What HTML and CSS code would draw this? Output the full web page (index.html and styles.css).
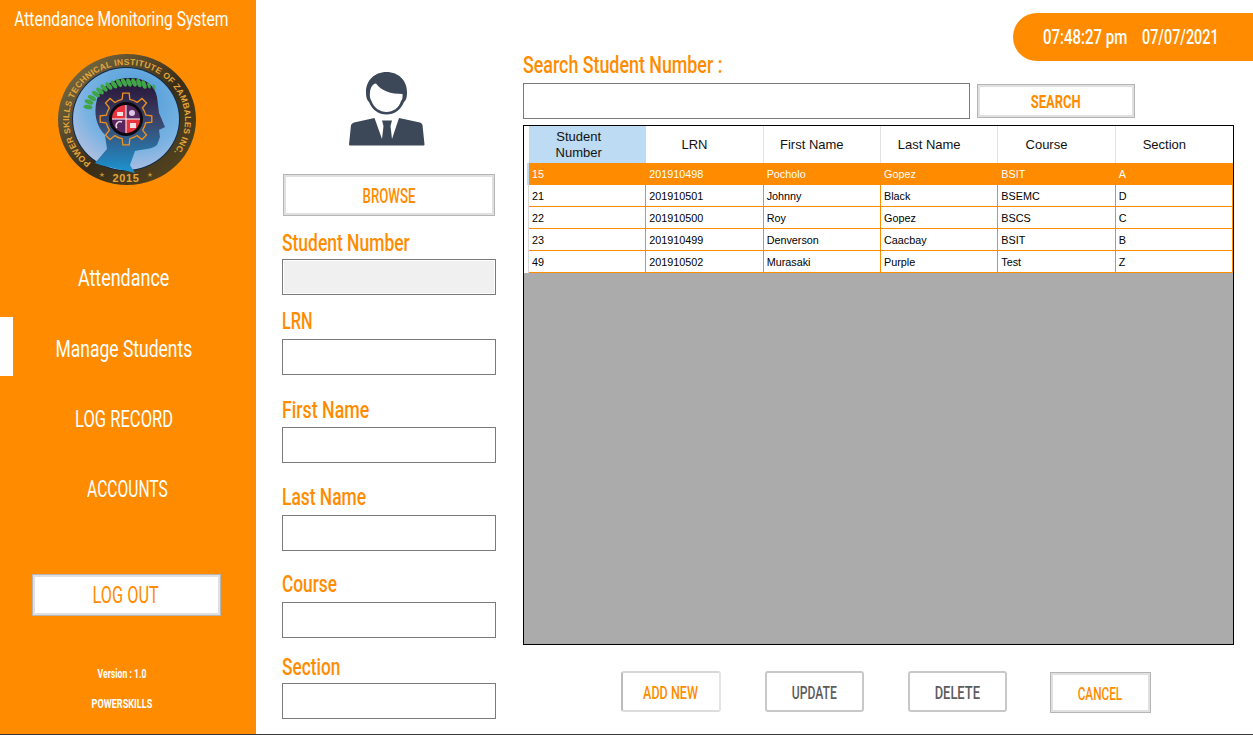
FILE: index.html
```html
<!DOCTYPE html>
<html lang="en">
<head>
<meta charset="utf-8">
<title>Attendance Monitoring System</title>
<link rel="stylesheet" href="styles.css">
</head>
<body>
<div class="app">
  <aside class="sidebar">
    <h1 class="app-title"><span class="sq">Attendance Monitoring System</span></h1>
    <svg class="logo" viewBox="0 0 155 150" width="155" height="150" aria-label="Power Skills Technical Institute of Zambales Inc. seal">
      <defs>
        <linearGradient id="ring" x1="0" y1="0" x2="1" y2="1">
          <stop offset="0" stop-color="#85764a"/><stop offset=".55" stop-color="#3a2d18"/><stop offset="1" stop-color="#5c4c22"/>
        </linearGradient>
        <radialGradient id="sky" cx=".6" cy=".3" r=".75">
          <stop offset="0" stop-color="#4a9bd8"/><stop offset=".65" stop-color="#78b2e2"/><stop offset="1" stop-color="#b4c0e0"/>
        </radialGradient>
        <linearGradient id="head" x1="0" y1="0" x2="0" y2="1">
          <stop offset="0" stop-color="#250f33"/><stop offset=".45" stop-color="#3c4468"/><stop offset="1" stop-color="#1b95d3"/>
        </linearGradient>
        <path id="ring-text" d="M41 118 A58 55 0 1 1 113 118"/>
        <path id="tooth" d="M-3.800 -19.600 L-3.200 -25.800 L3.200 -25.800 L3.800 -19.600 A20 20 0 0 1 11.200 -16.600"/>
        <ellipse id="leaf" rx="4.500" ry="2.200"/>
      </defs>
      <ellipse cx="77" cy="74.500" rx="69" ry="65.500" fill="url(#ring)"/>
      <ellipse cx="76" cy="74" rx="54" ry="52" fill="#102a4a"/>
      <ellipse cx="76" cy="74" rx="53" ry="51" fill="url(#sky)"/>
      <path d="M45 118 L57 104 L55 90 C47 82 43 70 47 54 C52 40 65 33 80 33 C95 33 105 40 107 52 L109 68 L115 82 L109 85 L110 92 L107 100 C103 104 95 104 85 106 L80 120 L85 128 C70 124 55 122 45 118Z" fill="url(#head)"/>
      <g fill="#3fa548">
        <use href="#leaf" transform="translate(38 62) rotate(10)"/>
        <use href="#leaf" transform="translate(39 57) rotate(20)"/>
        <use href="#leaf" transform="translate(42 53) rotate(30)"/>
        <use href="#leaf" transform="translate(46 49) rotate(35)"/>
        <use href="#leaf" transform="translate(50 46) rotate(40)"/>
        <use href="#leaf" transform="translate(54 43) rotate(45)"/>
        <use href="#leaf" transform="translate(59 41) rotate(50)"/>
        <use href="#leaf" transform="translate(64 39.500) rotate(55)"/>
        <use href="#leaf" transform="translate(69 38) rotate(60)"/>
        <use href="#leaf" transform="translate(74 37.500) rotate(60)"/>
        <use href="#leaf" transform="translate(79 37.500) rotate(65)"/>
        <use href="#leaf" transform="translate(84 37.500) rotate(65)"/>
        <use href="#leaf" transform="translate(89 38) rotate(70)"/>
        <use href="#leaf" transform="translate(94 39.500) rotate(70)"/>
        <use href="#leaf" transform="translate(99 40.500) rotate(70) scale(.7)"/>
        <use href="#leaf" transform="translate(104 42) rotate(70) scale(.6)"/>
      </g>
      <g transform="translate(76 74)">
        <g fill="none" stroke="#f0921e" stroke-width="1.300">
          <use href="#tooth"/>
          <use href="#tooth" transform="rotate(45)"/>
          <use href="#tooth" transform="rotate(90)"/>
          <use href="#tooth" transform="rotate(135)"/>
          <use href="#tooth" transform="rotate(180)"/>
          <use href="#tooth" transform="rotate(225)"/>
          <use href="#tooth" transform="rotate(270)"/>
          <use href="#tooth" transform="rotate(315)"/>
        </g>
        <circle r="17" fill="#0c0a10"/>
        <path d="M0 0V-14A14 14 0 0 0 -14 0Z" fill="#e8343f"/>
        <path d="M0 0V-14A14 14 0 0 1 14 0Z" fill="#5a2660"/>
        <path d="M0 0H-14A14 14 0 0 0 0 14Z" fill="#5a2660"/>
        <path d="M0 0H14A14 14 0 0 1 0 14Z" fill="#e8343f"/>
        <path d="M-14 0H14M0 -14V14" stroke="#fff" stroke-width="1"/>
        <rect x="-9" y="-7" width="6" height="4" fill="#f3dfe0"/>
        <circle cx="6" cy="-6" r="3" fill="#d9c7e0"/>
        <path d="M-9 9 A4 4 0 0 1 -4 3" fill="none" stroke="#f3dfe0" stroke-width="1.500"/>
        <rect x="4" y="4" width="6" height="5" fill="#f3dfe0"/>
      </g>
      <text class="seal-text"><textPath href="#ring-text" textLength="262" lengthAdjust="spacing">POWER SKILLS TECHNICAL INSTITUTE OF ZAMBALES INC.</textPath></text>
      <text class="seal-year" x="76" y="137" text-anchor="middle">2015</text>
      <text class="seal-star" x="52" y="132" text-anchor="middle">★</text>
      <text class="seal-star" x="100" y="132" text-anchor="middle">★</text>
    </svg>
    <nav class="nav">
      <a class="nav-item nav-attendance"><span class="nav-mark"></span><span class="nav-text"><span class="sq">Attendance</span></span></a>
      <a class="nav-item nav-manage is-active"><span class="nav-mark"></span><span class="nav-text"><span class="sq">Manage Students</span></span></a>
      <a class="nav-item nav-log"><span class="nav-mark"></span><span class="nav-text"><span class="sq">LOG RECORD</span></span></a>
      <a class="nav-item nav-accounts"><span class="nav-mark"></span><span class="nav-text"><span class="sq">ACCOUNTS</span></span></a>
    </nav>
    <button class="btn btn-logout"><span class="sq">LOG OUT</span></button>
    <p class="meta meta-version"><span class="sq">Version : 1.0</span></p>
    <p class="meta meta-brand"><span class="sq">POWERSKILLS</span></p>
  </aside>

  <section class="form-col">
    <svg class="avatar" viewBox="0 0 76 74" width="76" height="74" aria-label="Student photo placeholder">
      <path d="M37.500 0C50 0 58 9 58 20C58 26 57 28 55 30C52 38 45 42.500 37.500 42.500C30 42.500 23 38 20 30C18 28 17 26 17 20C17 9 25 0 37.500 0Z" fill="#3c4858"/>
      <path d="M27 11.500C32 19 42 22 53.500 22C54 26 53 28 52 29C50 36 44 40 37.500 40C31 40 25 36 22.500 29C21 27 20.500 24 21 20C21.500 15 24 12 27 11.500Z" fill="#fff"/>
      <path d="M0 72.500L2 53Q3 51 5 50.500L25.500 46L33 67L34.500 54L33 48.500H43L41.500 54L43 67L50 46L71 50.500Q73 51 73.500 53L75.500 72.500Q75.500 73.500 74.500 73.500H1Q0 73.500 0 72.500Z" fill="#3c4858"/>
    </svg>
    <button class="btn btn-browse"><span class="sq">BROWSE</span></button>
    <label class="field field-number"><span class="field-label"><span class="sq">Student Number</span></span><input class="input input-readonly" readonly></label>
    <label class="field field-lrn"><span class="field-label"><span class="sq">LRN</span></span><input class="input"></label>
    <label class="field field-first"><span class="field-label"><span class="sq">First Name</span></span><input class="input"></label>
    <label class="field field-last"><span class="field-label"><span class="sq">Last Name</span></span><input class="input"></label>
    <label class="field field-course"><span class="field-label"><span class="sq">Course</span></span><input class="input"></label>
    <label class="field field-section"><span class="field-label"><span class="sq">Section</span></span><input class="input"></label>
  </section>

  <section class="main-col">
    <header class="top-row">
      <h2 class="search-title"><span class="sq">Search Student Number :</span></h2>
      <div class="clock"><span class="sq clock-time">07:48:27 pm</span><span class="sq clock-date">07/07/2021</span></div>
    </header>
    <div class="search-row">
      <input class="input input-search">
      <button class="btn btn-search"><span class="sq">SEARCH</span></button>
    </div>
    <div class="grid-box">
      <table class="grid">
        <colgroup><col class="col-head"><col><col><col><col><col><col></colgroup>
        <thead>
          <tr><th class="corner"></th><th class="th-active">Student Number</th><th>LRN</th><th>First Name</th><th>Last Name</th><th>Course</th><th>Section</th></tr>
        </thead>
        <tbody>
          <tr class="is-selected"><td class="row-head"></td><td>15</td><td>201910498</td><td>Pocholo</td><td>Gopez</td><td>BSIT</td><td>A</td></tr>
          <tr><td class="row-head"></td><td>21</td><td>201910501</td><td>Johnny</td><td>Black</td><td>BSEMC</td><td>D</td></tr>
          <tr><td class="row-head"></td><td>22</td><td>201910500</td><td>Roy</td><td>Gopez</td><td>BSCS</td><td>C</td></tr>
          <tr><td class="row-head"></td><td>23</td><td>201910499</td><td>Denverson</td><td>Caacbay</td><td>BSIT</td><td>B</td></tr>
          <tr><td class="row-head"></td><td>49</td><td>201910502</td><td>Murasaki</td><td>Purple</td><td>Test</td><td>Z</td></tr>
        </tbody>
      </table>
    </div>
    <div class="actions">
      <button class="btn-action btn-add"><span class="sq">ADD NEW</span></button>
      <button class="btn-action btn-dark btn-update"><span class="sq">UPDATE</span></button>
      <button class="btn-action btn-dark btn-delete"><span class="sq">DELETE</span></button>
      <button class="btn btn-cancel"><span class="sq">CANCEL</span></button>
    </div>
  </section>
</div>
</body>
</html>
```

FILE: styles.css
```css
* { box-sizing: border-box; }
html, body { margin: 0; padding: 0; height: 735px; overflow: hidden; background: #fff; }
body { font-family: Roboto, "Liberation Sans", sans-serif; }

/* the reference's face is a condensed DIN: squeeze Roboto to it */
.sq { display: inline-block; white-space: nowrap; transform: scaleX(var(--sx, .72)); transform-origin: center; }

.app {
  display: grid;
  grid-template-columns: 256px 214px 710px;
  height: 735px;
  border-bottom: 1px solid #3a3a3a;
}

/* sidebar */
.sidebar {
  background: #ff8c00;
  display: flex;
  flex-direction: column;
  color: #fff;
  height: 734px;
  width: 256px;
}
.app-title { margin: 7px 0 0; height: 24px; font-size: 20px; line-height: 24px; font-weight: 400; width: 243px; display: flex; justify-content: center; white-space: nowrap; --sx: .78; }
.logo { display: block; margin: 14px 0 0 50px; }
.nav { margin-top: 49px; display: flex; flex-direction: column; }
.nav-item { display: grid; grid-template-columns: 13px 1fr; height: 70.4px; align-items: center; }
.nav-mark { height: 59px; margin-top: -6px; }
.is-active .nav-mark { background: #fff; }
.nav-text { font-size: 23px; line-height: 26px; display: flex; justify-content: center; padding-right: 21px; }
.nav-attendance { --sx: .78; }
.nav-manage { --sx: .76; }
.nav-log { --sx: .72; }
.nav-accounts { --sx: .68; }
.nav-accounts .nav-text { padding-right: 14px; }

.btn {
  display: block;
  background: #fff;
  border: 1px solid #b5b5b5;
  box-shadow: inset 0 0 0 2px #e0e0e0;
  color: #ff8c00;
  font-family: inherit;
  padding: 0;
  text-align: center;
}
.btn-logout { width: 189px; height: 42px; margin: 48.4px 0 0 32px; font-size: 24px; --sx: .68; padding-right: 2px; }
.meta { margin: 0; font-weight: 700; width: 244px; display: flex; justify-content: center; white-space: nowrap; }
.meta-version { margin-top: 50px; font-size: 12px; line-height: 16px; --sx: .72; }
.meta-brand { margin-top: 14px; font-size: 12px; line-height: 16px; --sx: .76; }

/* form column */
.form-col { margin-left: 26px; width: 214px; display: flex; flex-direction: column; }
.avatar { display: block; margin: 72px 0 0 67px; }
.btn-browse { width: 212px; height: 42px; margin: 28px 0 0 1px; font-size: 20px; --sx: .66; font-weight: 500; padding-top: 1px; }
.field { display: flex; flex-direction: column; justify-content: flex-end; --sx: .72; }
.field-label { color: #ff8c00; font-size: 24px; line-height: 28px; font-weight: 500; white-space: nowrap; margin-bottom: 2px; }
.field-label .sq { transform-origin: left center; }
.input {
  display: block;
  width: 214px;
  height: 36px;
  border: 1px solid #7a7a7a;
  background: #fff;
  padding: 0;
  outline: 0;
}
.input-readonly { background: #f0f0f0; box-shadow: inset 0 0 0 1px #fff; }
.field-number { height: 79px; --sx: .727; }
.field-lrn { height: 80px; --sx: .68; }
.field-lrn .field-label { margin-bottom: 4px; }
.field-first { height: 88px; --sx: .74; }
.field-first .field-label { margin-bottom: 3px; }
.field-last { height: 88px; --sx: .725; }
.field-last .field-label { margin-bottom: 4px; }
.field-course { height: 87px; }
.field-course .field-label { margin-bottom: 4px; }
.field-section { height: 81px; }

/* main column */
.main-col { margin-left: 53px; width: 710px; display: flex; flex-direction: column; }
.top-row { display: flex; justify-content: space-between; align-items: flex-start; height: 83px; margin-right: -20px; }
.search-title { margin: 53px 0 0; font-size: 23px; line-height: 26px; font-weight: 500; color: #ff8c00; white-space: nowrap; --sx: .775; }
.search-title .sq { transform-origin: left center; }
.clock {
  margin-top: 13px;
  width: 240px;
  height: 48px;
  background: #ff8c00;
  border-radius: 24px 0 0 24px;
  color: #fff;
  font-size: 21px;
  font-weight: 500;
  line-height: 48px;
  display: grid;
  grid-template-columns: 99px 1fr;
  padding-left: 30px;
  white-space: nowrap;
}
.clock .sq { transform-origin: left center; }
.clock-time { --sx: .715; }
.clock-date { --sx: .685; }
.search-row { display: flex; align-items: center; gap: 7px; height: 36px; }
.input-search { width: 447px; }
.btn-search { width: 158px; height: 34px; font-size: 18px; font-weight: 700; --sx: .72; padding-top: 1px; }

.grid-box { margin: 6px -1px 0 0; height: 520px; border: 1px solid #000; background: #ababab; }
.grid {
  width: 100%;
  table-layout: fixed;
  border-collapse: separate;
  border-spacing: 0;
  font-family: "Liberation Sans", Arial, sans-serif;
  background: #fff;
}
.col-head { width: 5px; }
.grid th { height: 37px; padding: 0 21px 0 1px; font-size: 13px; line-height: 16px; font-weight: 400; color: #111; border-right: 1px solid #e3e3e3; background: #fff; }
.grid th:last-child { border-right: 0; }
.grid .corner { padding: 0; border: 0; }
.grid .th-active { background: #bddbf2; border-right: 0; padding: 0 38px 0 20px; }
.grid td { height: 22px; padding: 0 0 0 3px; font-size: 10.8px; color: #000; border-right: 1px solid #ff8c00; border-bottom: 1px solid #ff8c00; white-space: nowrap; }
.grid .row-head { padding: 0; border: 0; background: #fff; box-shadow: inset -1px 0 0 #d8d8d8; }
.is-selected td { background: #ff8c00; color: #fff; }
.grid .is-selected .row-head { background: #fff; box-shadow: inset -2px 0 0 #bddbf2; }

.actions { display: flex; align-items: flex-start; padding: 26px 0 0 98px; gap: 44px; }
.btn-action {
  height: 41px;
  width: 99px;
  background: #fff;
  border: 2px solid #c8c8c8;
  border-radius: 3px;
  font-family: inherit;
  font-size: 19px;
  font-weight: 500;
  padding: 2px 0 0;
}
.btn-add { width: 100px; color: #ff8c00; border-color: #d8d8d8 #e4e4e4 #dcdcdc #bcbcbc; --sx: .66; }
.btn-dark { color: #5c5c5c; }
.btn-update { --sx: .64; }
.btn-delete { --sx: .68; }
.btn-cancel { width: 101px; height: 41px; margin: 1px 0 0 -1px; font-size: 19px; font-weight: 500; --sx: .62; padding: 2px 2px 0 0; }

/* seal text */
.seal-text { font: 700 8.6px "Liberation Sans", sans-serif; fill: #e3a63a; }
.seal-year { font: 700 11px "Liberation Sans", sans-serif; fill: #e3a63a; letter-spacing: .6px; }
.seal-star { font: 7px "DejaVu Sans", sans-serif; fill: #c08a30; }
```
